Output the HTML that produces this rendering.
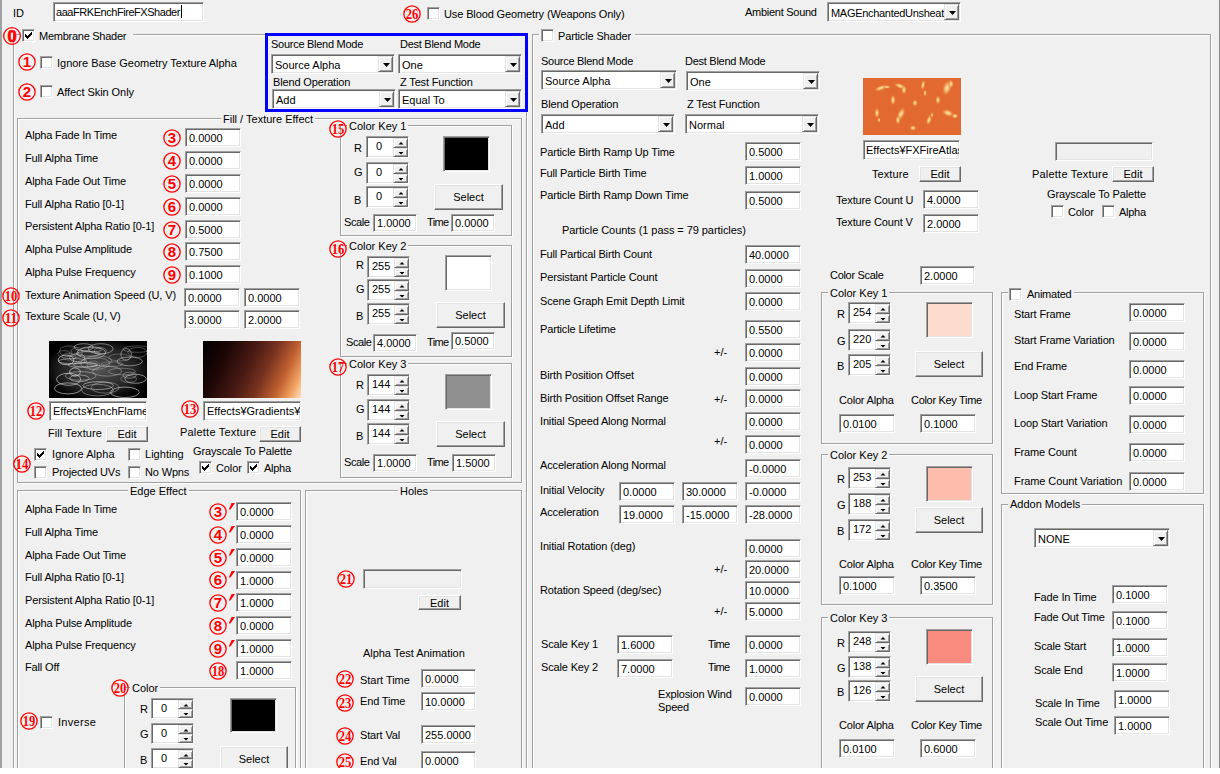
<!DOCTYPE html><html><head><meta charset="utf-8"><style>
*{margin:0;padding:0;box-sizing:border-box}
html,body{width:1220px;height:774px;overflow:hidden;background:#f0f0f0}
body{position:relative;font-family:"Liberation Sans",sans-serif;font-size:11px;color:#000}
.l{position:absolute;white-space:nowrap;line-height:13px}
.gt{background:#f0f0f0;padding:0 2px}
.tb{position:absolute;background:#fff;border:1px solid;border-color:#a0a0a0 #fff #fff #a0a0a0;box-shadow:inset 1px 1px #696969,inset -1px -1px #e3e3e3;overflow:hidden}
.tb>span{position:absolute;white-space:nowrap;line-height:13px}
.cb{position:absolute;width:13px;height:13px;background:#fff;border:1px solid;border-color:#a0a0a0 #fff #fff #a0a0a0;box-shadow:inset 1px 1px #696969,inset -1px -1px #e3e3e3}
.gg{position:absolute;border:1px solid #a0a0a0}
.gw{position:absolute;border:1px solid #fff}
.dd{position:absolute;right:1px;top:1px;background:#f0f0f0;border:1px solid;border-color:#e3e3e3 #696969 #696969 #e3e3e3;box-shadow:inset 1px 1px #fff,inset -1px -1px #a0a0a0}
.sp{position:absolute;width:15px;background:#f0f0f0;border:1px solid;border-color:#e3e3e3 #696969 #696969 #e3e3e3;box-shadow:inset 1px 1px #fff,inset -1px -1px #a0a0a0}
.bt{position:absolute;background:#f0f0f0;border:1px solid;border-color:#fff #696969 #696969 #fff;box-shadow:inset -1px -1px #a0a0a0,inset 1px 1px #e3e3e3;text-align:center}
.bt>span{position:absolute;left:0;right:0;line-height:13px;white-space:nowrap}
.sw{position:absolute;border:1px solid;border-color:#a0a0a0 #fff #fff #a0a0a0;box-shadow:inset 1px 1px #696969,inset -1px -1px #e3e3e3}
.c{position:absolute;overflow:visible}
.bl{position:absolute;border:3px solid #0000ff}
</style></head><body><div style="position:absolute;left:0;top:0;width:2px;height:774px;background:#a0a0a0"></div>
<div style="position:absolute;left:1219px;top:0;width:1px;height:774px;background:#888"></div>
<div class="l" style="left:13px;top:7px;letter-spacing:0px;">ID</div>
<div class="tb" style="left:53px;top:2px;width:151px;height:20px;background:#fff"><span style="left:2px;top:3px;letter-spacing:-0.45px;">aaaFRKEnchFireFXShader</span></div>
<div style="position:absolute;left:181px;top:5px;width:1px;height:13px;background:#000"></div>
<svg class="c" width="24" height="24" style="left:400.00px;top:1.60px"><circle cx="12.0" cy="12.0" r="8.15" fill="none" stroke="#f00" stroke-width="1.3"/><text x="5.7" y="17.3" textLength="12.6" lengthAdjust="spacingAndGlyphs" font-family="Liberation Serif" font-weight="bold" font-size="15.5" fill="#f00">26</text></svg>
<div class="cb" style="left:427px;top:7px"></div>
<div class="l" style="left:444px;top:8px;letter-spacing:-0.12px;">Use Blood Geometry (Weapons Only)</div>
<div class="l" style="left:745px;top:6px;letter-spacing:-0.27px;">Ambient Sound</div>
<div class="tb" style="left:827px;top:2px;width:134px;height:20px"><span style="left:3px;top:4px"><span style="letter-spacing:-0.3px">MAGEnchantedUnsheat</span></span><div class="dd" style="width:15px;height:16px"><svg width="15" height="16" style="position:absolute;left:0;top:0"><path d="M4 6 h7 l-3.5 4z" fill="#000"/></svg></div></div>
<div class="gw" style="left:14px;top:35px;width:514px;height:799px"></div>
<div class="gg" style="left:13px;top:34px;width:514px;height:799px"></div>
<div class="l gt" style="left:21px;top:30px;width:112px;height:13px;padding:0"></div>
<svg class="c" width="24" height="24" style="left:0.00px;top:24.00px"><circle cx="12.0" cy="12.0" r="8.35" fill="none" stroke="#f00" stroke-width="1.3"/><text x="12.0" y="17.8" text-anchor="middle" font-family="Liberation Sans" font-weight="bold" font-size="16.5" fill="#f00" stroke="#f00" stroke-width="0.7">0</text></svg>
<div class="cb" style="left:22px;top:29px"><svg width="7" height="7" style="position:absolute;left:2px;top:2px" shape-rendering="crispEdges" fill="#000"><rect x="6" y="0" width="1" height="1"/><rect x="5" y="1" width="1" height="1"/><rect x="6" y="1" width="1" height="1"/><rect x="0" y="2" width="1" height="1"/><rect x="4" y="2" width="1" height="1"/><rect x="5" y="2" width="1" height="1"/><rect x="6" y="2" width="1" height="1"/><rect x="0" y="3" width="1" height="1"/><rect x="1" y="3" width="1" height="1"/><rect x="3" y="3" width="1" height="1"/><rect x="4" y="3" width="1" height="1"/><rect x="5" y="3" width="1" height="1"/><rect x="0" y="4" width="1" height="1"/><rect x="1" y="4" width="1" height="1"/><rect x="2" y="4" width="1" height="1"/><rect x="3" y="4" width="1" height="1"/><rect x="4" y="4" width="1" height="1"/><rect x="1" y="5" width="1" height="1"/><rect x="2" y="5" width="1" height="1"/><rect x="3" y="5" width="1" height="1"/><rect x="2" y="6" width="1" height="1"/></svg></div>
<div class="l" style="left:39px;top:30px;letter-spacing:-0.26px;">Membrane Shader</div>
<svg class="c" width="24" height="24" style="left:14.70px;top:50.00px"><circle cx="12.0" cy="12.0" r="8.15" fill="none" stroke="#f00" stroke-width="1.3"/><text x="12.0" y="17.3" text-anchor="middle" font-family="Liberation Sans" font-weight="bold" font-size="15" fill="#f00">1</text></svg>
<div class="cb" style="left:40px;top:56px"></div>
<div class="l" style="left:57px;top:57px;letter-spacing:-0.01px;">Ignore Base Geometry Texture Alpha</div>
<svg class="c" width="24" height="24" style="left:14.70px;top:79.50px"><circle cx="12.0" cy="12.0" r="8.15" fill="none" stroke="#f00" stroke-width="1.3"/><text x="12.0" y="17.3" text-anchor="middle" font-family="Liberation Sans" font-weight="bold" font-size="15" fill="#f00">2</text></svg>
<div class="cb" style="left:40px;top:85px"></div>
<div class="l" style="left:57px;top:86px;letter-spacing:-0.07px;">Affect Skin Only</div>
<div class="bl" style="left:265px;top:33px;width:263px;height:79px"></div>
<div class="l" style="left:271px;top:38px;letter-spacing:-0.27px;">Source Blend Mode</div>
<div class="l" style="left:400px;top:38px;letter-spacing:-0.27px;">Dest Blend Mode</div>
<div class="tb" style="left:271px;top:54px;width:124px;height:20px"><span style="left:3px;top:4px">Source Alpha</span><div class="dd" style="width:15px;height:16px"><svg width="15" height="16" style="position:absolute;left:0;top:0"><path d="M4 6 h7 l-3.5 4z" fill="#000"/></svg></div></div>
<div class="tb" style="left:398px;top:54px;width:124px;height:20px"><span style="left:3px;top:4px">One</span><div class="dd" style="width:15px;height:16px"><svg width="15" height="16" style="position:absolute;left:0;top:0"><path d="M4 6 h7 l-3.5 4z" fill="#000"/></svg></div></div>
<div class="l" style="left:273px;top:76px;letter-spacing:-0.15px;">Blend Operation</div>
<div class="l" style="left:400px;top:76px;letter-spacing:-0.15px;">Z Test Function</div>
<div class="tb" style="left:272px;top:89px;width:124px;height:20px"><span style="left:3px;top:4px">Add</span><div class="dd" style="width:15px;height:16px"><svg width="15" height="16" style="position:absolute;left:0;top:0"><path d="M4 6 h7 l-3.5 4z" fill="#000"/></svg></div></div>
<div class="tb" style="left:398px;top:89px;width:124px;height:20px"><span style="left:3px;top:4px">Equal To</span><div class="dd" style="width:15px;height:16px"><svg width="15" height="16" style="position:absolute;left:0;top:0"><path d="M4 6 h7 l-3.5 4z" fill="#000"/></svg></div></div>
<div class="gw" style="left:18px;top:119px;width:505px;height:365px"></div>
<div class="gg" style="left:17px;top:118px;width:505px;height:365px"></div>
<div class="l gt" style="left:221px;top:113px;">Fill / Texture Effect</div>
<div class="l" style="left:25px;top:129px;letter-spacing:-0.19px;">Alpha Fade In Time</div>
<div class="tb" style="left:185px;top:128px;width:56px;height:19px;background:#fff"><span style="left:3px;top:3px;letter-spacing:0px;">0.0000</span></div>
<svg class="c" width="24" height="24" style="left:159.70px;top:126.00px"><circle cx="12.0" cy="12.0" r="8.15" fill="none" stroke="#f00" stroke-width="1.3"/><text x="12.0" y="17.3" text-anchor="middle" font-family="Liberation Sans" font-weight="bold" font-size="15" fill="#f00">3</text></svg>
<div class="l" style="left:25px;top:152px;letter-spacing:-0.15px;">Full Alpha Time</div>
<div class="tb" style="left:185px;top:151px;width:56px;height:19px;background:#fff"><span style="left:3px;top:3px;letter-spacing:0px;">0.0000</span></div>
<svg class="c" width="24" height="24" style="left:159.70px;top:149.00px"><circle cx="12.0" cy="12.0" r="8.15" fill="none" stroke="#f00" stroke-width="1.3"/><text x="12.0" y="17.3" text-anchor="middle" font-family="Liberation Sans" font-weight="bold" font-size="15" fill="#f00">4</text></svg>
<div class="l" style="left:25px;top:175px;letter-spacing:-0.15px;">Alpha Fade Out Time</div>
<div class="tb" style="left:185px;top:174px;width:56px;height:19px;background:#fff"><span style="left:3px;top:3px;letter-spacing:0px;">0.0000</span></div>
<svg class="c" width="24" height="24" style="left:159.70px;top:172.00px"><circle cx="12.0" cy="12.0" r="8.15" fill="none" stroke="#f00" stroke-width="1.3"/><text x="12.0" y="17.3" text-anchor="middle" font-family="Liberation Sans" font-weight="bold" font-size="15" fill="#f00">5</text></svg>
<div class="l" style="left:25px;top:198px;letter-spacing:-0.15px;">Full Alpha Ratio [0-1]</div>
<div class="tb" style="left:185px;top:197px;width:56px;height:19px;background:#fff"><span style="left:3px;top:3px;letter-spacing:0px;">0.0000</span></div>
<svg class="c" width="24" height="24" style="left:159.70px;top:195.00px"><circle cx="12.0" cy="12.0" r="8.15" fill="none" stroke="#f00" stroke-width="1.3"/><text x="12.0" y="17.3" text-anchor="middle" font-family="Liberation Sans" font-weight="bold" font-size="15" fill="#f00">6</text></svg>
<div class="l" style="left:25px;top:220px;letter-spacing:-0.15px;">Persistent Alpha Ratio [0-1]</div>
<div class="tb" style="left:185px;top:220px;width:56px;height:19px;background:#fff"><span style="left:3px;top:3px;letter-spacing:0px;">0.5000</span></div>
<svg class="c" width="24" height="24" style="left:159.70px;top:218.00px"><circle cx="12.0" cy="12.0" r="8.15" fill="none" stroke="#f00" stroke-width="1.3"/><text x="12.0" y="17.3" text-anchor="middle" font-family="Liberation Sans" font-weight="bold" font-size="15" fill="#f00">7</text></svg>
<div class="l" style="left:25px;top:243px;letter-spacing:-0.15px;">Alpha Pulse Amplitude</div>
<div class="tb" style="left:185px;top:242px;width:56px;height:19px;background:#fff"><span style="left:3px;top:3px;letter-spacing:0px;">0.7500</span></div>
<svg class="c" width="24" height="24" style="left:159.70px;top:240.00px"><circle cx="12.0" cy="12.0" r="8.15" fill="none" stroke="#f00" stroke-width="1.3"/><text x="12.0" y="17.3" text-anchor="middle" font-family="Liberation Sans" font-weight="bold" font-size="15" fill="#f00">8</text></svg>
<div class="l" style="left:25px;top:266px;letter-spacing:-0.15px;">Alpha Pulse Frequency</div>
<div class="tb" style="left:185px;top:265px;width:56px;height:19px;background:#fff"><span style="left:3px;top:3px;letter-spacing:0px;">0.1000</span></div>
<svg class="c" width="24" height="24" style="left:159.70px;top:263.00px"><circle cx="12.0" cy="12.0" r="8.15" fill="none" stroke="#f00" stroke-width="1.3"/><text x="12.0" y="17.3" text-anchor="middle" font-family="Liberation Sans" font-weight="bold" font-size="15" fill="#f00">9</text></svg>
<div class="l" style="left:25px;top:289px;letter-spacing:-0.1px;">Texture Animation Speed (U, V)</div>
<svg class="c" width="24" height="24" style="left:-1.20px;top:284.00px"><circle cx="12.0" cy="12.0" r="8.15" fill="none" stroke="#f00" stroke-width="1.3"/><text x="5.7" y="17.3" textLength="12.6" lengthAdjust="spacingAndGlyphs" font-family="Liberation Serif" font-weight="bold" font-size="15.5" fill="#f00">10</text></svg>
<div class="tb" style="left:184px;top:288px;width:56px;height:19px;background:#fff"><span style="left:3px;top:3px;letter-spacing:0px;">0.0000</span></div>
<div class="tb" style="left:244px;top:288px;width:56px;height:19px;background:#fff"><span style="left:3px;top:3px;letter-spacing:0px;">0.0000</span></div>
<div class="l" style="left:25px;top:310px;letter-spacing:-0.15px;">Texture Scale (U, V)</div>
<svg class="c" width="24" height="24" style="left:-1.20px;top:305.50px"><circle cx="12.0" cy="12.0" r="8.15" fill="none" stroke="#f00" stroke-width="1.3"/><text x="5.7" y="17.3" textLength="12.6" lengthAdjust="spacingAndGlyphs" font-family="Liberation Serif" font-weight="bold" font-size="15.5" fill="#f00">11</text></svg>
<div class="tb" style="left:184px;top:310px;width:56px;height:19px;background:#fff"><span style="left:3px;top:3px;letter-spacing:0px;">3.0000</span></div>
<div class="tb" style="left:244px;top:310px;width:56px;height:19px;background:#fff"><span style="left:3px;top:3px;letter-spacing:0px;">2.0000</span></div>
<svg width="98" height="57" style="position:absolute;left:49px;top:341px"><defs><radialGradient id="fg" cx="50%" cy="50%" r="55%"><stop offset="0" stop-color="#555"/><stop offset="0.7" stop-color="#222"/><stop offset="1" stop-color="#000"/></radialGradient></defs><rect width="98" height="57" fill="#000"/><rect width="98" height="57" fill="url(#fg)"/><g fill="none" stroke="#ddd" stroke-width="1"><ellipse cx="39.3" cy="12.9" rx="12.2" ry="2.3" stroke-opacity="0.49"/><ellipse cx="42.4" cy="8.7" rx="10.6" ry="2.1" stroke-opacity="0.45"/><ellipse cx="20.2" cy="10.2" rx="9.7" ry="5.3" stroke-opacity="0.31"/><ellipse cx="31.7" cy="34.9" rx="15.4" ry="4.3" stroke-opacity="0.43"/><ellipse cx="88.2" cy="8.1" rx="14.4" ry="3.2" stroke-opacity="0.31"/><ellipse cx="23.8" cy="20.2" rx="14.0" ry="2.7" stroke-opacity="0.51"/><ellipse cx="62.9" cy="23.1" rx="11.0" ry="2.3" stroke-opacity="0.28"/><ellipse cx="30.4" cy="37.3" rx="9.7" ry="3.3" stroke-opacity="0.51"/><ellipse cx="49.0" cy="19.8" rx="13.7" ry="4.8" stroke-opacity="0.36"/><ellipse cx="58.1" cy="30.2" rx="14.6" ry="4.9" stroke-opacity="0.38"/><ellipse cx="88.5" cy="11.4" rx="9.6" ry="5.0" stroke-opacity="0.32"/><ellipse cx="51.7" cy="7.8" rx="12.4" ry="5.1" stroke-opacity="0.51"/><ellipse cx="80.7" cy="20.4" rx="12.6" ry="4.4" stroke-opacity="0.51"/><ellipse cx="49.2" cy="44.6" rx="15.4" ry="3.9" stroke-opacity="0.55"/><ellipse cx="19.6" cy="38.3" rx="12.1" ry="6.0" stroke-opacity="0.62"/><ellipse cx="36.3" cy="23.7" rx="12.4" ry="2.1" stroke-opacity="0.46"/><ellipse cx="27.6" cy="11.4" rx="5.6" ry="5.1" stroke-opacity="0.31"/><ellipse cx="33.6" cy="24.0" rx="14.6" ry="2.3" stroke-opacity="0.45"/><ellipse cx="56.2" cy="46.6" rx="14.0" ry="5.5" stroke-opacity="0.38"/><ellipse cx="46.1" cy="22.5" rx="14.7" ry="5.8" stroke-opacity="0.32"/><ellipse cx="28.2" cy="16.7" rx="7.6" ry="3.9" stroke-opacity="0.52"/><ellipse cx="34.7" cy="6.2" rx="9.6" ry="3.5" stroke-opacity="0.50"/><ellipse cx="86.5" cy="37.8" rx="10.7" ry="4.5" stroke-opacity="0.55"/><ellipse cx="19.0" cy="47.4" rx="13.6" ry="5.5" stroke-opacity="0.61"/><ellipse cx="44.4" cy="24.4" rx="6.1" ry="4.5" stroke-opacity="0.28"/><ellipse cx="20.1" cy="15.6" rx="6.8" ry="3.4" stroke-opacity="0.27"/><ellipse cx="15.0" cy="13.0" rx="6.1" ry="3.5" stroke-opacity="0.26"/><ellipse cx="80.6" cy="34.2" rx="6.6" ry="3.0" stroke-opacity="0.41"/><ellipse cx="42.3" cy="11.7" rx="14.3" ry="6.0" stroke-opacity="0.46"/><ellipse cx="51.3" cy="10.0" rx="6.1" ry="3.4" stroke-opacity="0.37"/><ellipse cx="77.2" cy="13.4" rx="5.3" ry="5.8" stroke-opacity="0.49"/><ellipse cx="26.0" cy="31.0" rx="5.3" ry="4.1" stroke-opacity="0.69"/><ellipse cx="79.7" cy="38.0" rx="7.9" ry="3.5" stroke-opacity="0.33"/><ellipse cx="72.9" cy="30.5" rx="13.6" ry="3.3" stroke-opacity="0.35"/><ellipse cx="75.9" cy="51.3" rx="14.4" ry="5.2" stroke-opacity="0.62"/><ellipse cx="70.5" cy="16.4" rx="10.7" ry="3.4" stroke-opacity="0.26"/><ellipse cx="17.1" cy="18.9" rx="7.9" ry="4.8" stroke-opacity="0.68"/><ellipse cx="48.5" cy="49.1" rx="15.9" ry="5.8" stroke-opacity="0.41"/></g></svg>
<div style="position:absolute;left:203px;top:341px;width:98px;height:57px;background:linear-gradient(115deg, #000 0%, #1c0606 22%, #4a1a14 45%, #7a3420 62%, #c06030 78%, #f0a060 90%, #ffe0b8 100%)"></div>
<svg class="c" width="24" height="24" style="left:23.60px;top:398.60px"><circle cx="12.0" cy="12.0" r="8.15" fill="none" stroke="#f00" stroke-width="1.3"/><text x="5.7" y="17.3" textLength="12.6" lengthAdjust="spacingAndGlyphs" font-family="Liberation Serif" font-weight="bold" font-size="15.5" fill="#f00">12</text></svg>
<div class="tb" style="left:49px;top:401px;width:98px;height:20px;background:#fff"><span style="left:3px;top:3px;letter-spacing:0px;">Effects¥EnchFlameI</span></div>
<svg class="c" width="24" height="24" style="left:178.00px;top:397.40px"><circle cx="12.0" cy="12.0" r="8.15" fill="none" stroke="#f00" stroke-width="1.3"/><text x="5.7" y="17.3" textLength="12.6" lengthAdjust="spacingAndGlyphs" font-family="Liberation Serif" font-weight="bold" font-size="15.5" fill="#f00">13</text></svg>
<div class="tb" style="left:203px;top:401px;width:98px;height:20px;background:#fff"><span style="left:3px;top:3px;letter-spacing:0px;">Effects¥Gradients¥</span></div>
<div class="l" style="left:48px;top:427px;letter-spacing:0.08px;">Fill Texture</div>
<div class="bt" style="left:106px;top:426px;width:42px;height:16px"><span style="top:1px">Edit</span></div>
<div class="l" style="left:180px;top:426px;letter-spacing:0.21px;">Palette Texture</div>
<div class="bt" style="left:259px;top:426px;width:42px;height:16px"><span style="top:1px">Edit</span></div>
<div class="cb" style="left:34px;top:448px"><svg width="7" height="7" style="position:absolute;left:2px;top:2px" shape-rendering="crispEdges" fill="#000"><rect x="6" y="0" width="1" height="1"/><rect x="5" y="1" width="1" height="1"/><rect x="6" y="1" width="1" height="1"/><rect x="0" y="2" width="1" height="1"/><rect x="4" y="2" width="1" height="1"/><rect x="5" y="2" width="1" height="1"/><rect x="6" y="2" width="1" height="1"/><rect x="0" y="3" width="1" height="1"/><rect x="1" y="3" width="1" height="1"/><rect x="3" y="3" width="1" height="1"/><rect x="4" y="3" width="1" height="1"/><rect x="5" y="3" width="1" height="1"/><rect x="0" y="4" width="1" height="1"/><rect x="1" y="4" width="1" height="1"/><rect x="2" y="4" width="1" height="1"/><rect x="3" y="4" width="1" height="1"/><rect x="4" y="4" width="1" height="1"/><rect x="1" y="5" width="1" height="1"/><rect x="2" y="5" width="1" height="1"/><rect x="3" y="5" width="1" height="1"/><rect x="2" y="6" width="1" height="1"/></svg></div>
<div class="l" style="left:52px;top:448px;letter-spacing:0.07px;">Ignore Alpha</div>
<div class="cb" style="left:128px;top:448px"></div>
<div class="l" style="left:145px;top:448px;letter-spacing:0.03px;">Lighting</div>
<div class="cb" style="left:34px;top:466px"></div>
<div class="l" style="left:52px;top:466px;letter-spacing:-0.15px;">Projected UVs</div>
<div class="cb" style="left:128px;top:466px"></div>
<div class="l" style="left:145px;top:466px;letter-spacing:-0.15px;">No Wpns</div>
<svg class="c" width="24" height="24" style="left:9.80px;top:451.50px"><circle cx="12.0" cy="12.0" r="8.15" fill="none" stroke="#f00" stroke-width="1.3"/><text x="5.7" y="17.3" textLength="12.6" lengthAdjust="spacingAndGlyphs" font-family="Liberation Serif" font-weight="bold" font-size="15.5" fill="#f00">14</text></svg>
<div class="l" style="left:193px;top:445px;letter-spacing:-0.12px;">Grayscale To Palette</div>
<div class="cb" style="left:199px;top:461px"><svg width="7" height="7" style="position:absolute;left:2px;top:2px" shape-rendering="crispEdges" fill="#000"><rect x="6" y="0" width="1" height="1"/><rect x="5" y="1" width="1" height="1"/><rect x="6" y="1" width="1" height="1"/><rect x="0" y="2" width="1" height="1"/><rect x="4" y="2" width="1" height="1"/><rect x="5" y="2" width="1" height="1"/><rect x="6" y="2" width="1" height="1"/><rect x="0" y="3" width="1" height="1"/><rect x="1" y="3" width="1" height="1"/><rect x="3" y="3" width="1" height="1"/><rect x="4" y="3" width="1" height="1"/><rect x="5" y="3" width="1" height="1"/><rect x="0" y="4" width="1" height="1"/><rect x="1" y="4" width="1" height="1"/><rect x="2" y="4" width="1" height="1"/><rect x="3" y="4" width="1" height="1"/><rect x="4" y="4" width="1" height="1"/><rect x="1" y="5" width="1" height="1"/><rect x="2" y="5" width="1" height="1"/><rect x="3" y="5" width="1" height="1"/><rect x="2" y="6" width="1" height="1"/></svg></div>
<div class="l" style="left:216px;top:462px;letter-spacing:-0.12px;">Color</div>
<div class="cb" style="left:247px;top:461px"><svg width="7" height="7" style="position:absolute;left:2px;top:2px" shape-rendering="crispEdges" fill="#000"><rect x="6" y="0" width="1" height="1"/><rect x="5" y="1" width="1" height="1"/><rect x="6" y="1" width="1" height="1"/><rect x="0" y="2" width="1" height="1"/><rect x="4" y="2" width="1" height="1"/><rect x="5" y="2" width="1" height="1"/><rect x="6" y="2" width="1" height="1"/><rect x="0" y="3" width="1" height="1"/><rect x="1" y="3" width="1" height="1"/><rect x="3" y="3" width="1" height="1"/><rect x="4" y="3" width="1" height="1"/><rect x="5" y="3" width="1" height="1"/><rect x="0" y="4" width="1" height="1"/><rect x="1" y="4" width="1" height="1"/><rect x="2" y="4" width="1" height="1"/><rect x="3" y="4" width="1" height="1"/><rect x="4" y="4" width="1" height="1"/><rect x="1" y="5" width="1" height="1"/><rect x="2" y="5" width="1" height="1"/><rect x="3" y="5" width="1" height="1"/><rect x="2" y="6" width="1" height="1"/></svg></div>
<div class="l" style="left:264px;top:462px;letter-spacing:-0.28px;">Alpha</div>
<div class="gw" style="left:341px;top:126px;width:172px;height:111px"></div>
<div class="gg" style="left:340px;top:125px;width:172px;height:111px"></div>
<div class="l gt" style="left:347px;top:120px;">Color Key 1</div>
<svg class="c" width="24" height="24" style="left:325.80px;top:117.00px"><circle cx="12.0" cy="12.0" r="8.15" fill="none" stroke="#f00" stroke-width="1.3"/><text x="5.7" y="17.3" textLength="12.6" lengthAdjust="spacingAndGlyphs" font-family="Liberation Serif" font-weight="bold" font-size="15.5" fill="#f00">15</text></svg>
<div class="l" style="left:354px;top:142px;letter-spacing:0px;">R</div>
<div class="tb" style="left:366px;top:136px;width:43px;height:22px"><span style="left:9px;top:3px">0</span><div class="sp" style="left:26px;top:1px;height:10px"><svg width="14" height="9" style="position:absolute;left:0;top:0"><path d="M4.5 5.5 h5 l-2.5 -2.5z" fill="#000"/></svg></div><div class="sp" style="left:26px;top:11px;height:9px"><svg width="14" height="9" style="position:absolute;left:0;top:0"><path d="M4.5 3 h5 l-2.5 2.5z" fill="#000"/></svg></div></div>
<div class="l" style="left:354px;top:166px;letter-spacing:0px;">G</div>
<div class="tb" style="left:366px;top:162px;width:43px;height:22px"><span style="left:9px;top:3px">0</span><div class="sp" style="left:26px;top:1px;height:10px"><svg width="14" height="9" style="position:absolute;left:0;top:0"><path d="M4.5 5.5 h5 l-2.5 -2.5z" fill="#000"/></svg></div><div class="sp" style="left:26px;top:11px;height:9px"><svg width="14" height="9" style="position:absolute;left:0;top:0"><path d="M4.5 3 h5 l-2.5 2.5z" fill="#000"/></svg></div></div>
<div class="l" style="left:354px;top:194px;letter-spacing:0px;">B</div>
<div class="tb" style="left:366px;top:186px;width:43px;height:22px"><span style="left:9px;top:3px">0</span><div class="sp" style="left:26px;top:1px;height:10px"><svg width="14" height="9" style="position:absolute;left:0;top:0"><path d="M4.5 5.5 h5 l-2.5 -2.5z" fill="#000"/></svg></div><div class="sp" style="left:26px;top:11px;height:9px"><svg width="14" height="9" style="position:absolute;left:0;top:0"><path d="M4.5 3 h5 l-2.5 2.5z" fill="#000"/></svg></div></div>
<div class="sw" style="left:443px;top:136px;width:47px;height:36px;background:#000"></div>
<div class="bt" style="left:434px;top:184px;width:69px;height:26px"><span style="top:6px">Select</span></div>
<div class="l" style="left:344px;top:216px;letter-spacing:-0.42px;">Scale</div>
<div class="tb" style="left:373px;top:214px;width:44px;height:18px;background:#fff"><span style="left:3px;top:2px;letter-spacing:0px;">1.0000</span></div>
<div class="l" style="left:427px;top:216px;letter-spacing:-0.6px;">Time</div>
<div class="tb" style="left:451px;top:214px;width:44px;height:18px;background:#fff"><span style="left:3px;top:2px;letter-spacing:0px;">0.0000</span></div>
<div class="gw" style="left:341px;top:246px;width:172px;height:112px"></div>
<div class="gg" style="left:340px;top:245px;width:172px;height:112px"></div>
<div class="l gt" style="left:347px;top:240px;">Color Key 2</div>
<svg class="c" width="24" height="24" style="left:325.80px;top:237.00px"><circle cx="12.0" cy="12.0" r="8.15" fill="none" stroke="#f00" stroke-width="1.3"/><text x="5.7" y="17.3" textLength="12.6" lengthAdjust="spacingAndGlyphs" font-family="Liberation Serif" font-weight="bold" font-size="15.5" fill="#f00">16</text></svg>
<div class="l" style="left:356px;top:259px;letter-spacing:0px;">R</div>
<div class="tb" style="left:367px;top:256px;width:43px;height:22px"><span style="left:4px;top:3px">255</span><div class="sp" style="left:26px;top:1px;height:10px"><svg width="14" height="9" style="position:absolute;left:0;top:0"><path d="M4.5 5.5 h5 l-2.5 -2.5z" fill="#000"/></svg></div><div class="sp" style="left:26px;top:11px;height:9px"><svg width="14" height="9" style="position:absolute;left:0;top:0"><path d="M4.5 3 h5 l-2.5 2.5z" fill="#000"/></svg></div></div>
<div class="l" style="left:356px;top:283px;letter-spacing:0px;">G</div>
<div class="tb" style="left:367px;top:279px;width:43px;height:22px"><span style="left:4px;top:3px">255</span><div class="sp" style="left:26px;top:1px;height:10px"><svg width="14" height="9" style="position:absolute;left:0;top:0"><path d="M4.5 5.5 h5 l-2.5 -2.5z" fill="#000"/></svg></div><div class="sp" style="left:26px;top:11px;height:9px"><svg width="14" height="9" style="position:absolute;left:0;top:0"><path d="M4.5 3 h5 l-2.5 2.5z" fill="#000"/></svg></div></div>
<div class="l" style="left:356px;top:310px;letter-spacing:0px;">B</div>
<div class="tb" style="left:367px;top:303px;width:43px;height:22px"><span style="left:4px;top:3px">255</span><div class="sp" style="left:26px;top:1px;height:10px"><svg width="14" height="9" style="position:absolute;left:0;top:0"><path d="M4.5 5.5 h5 l-2.5 -2.5z" fill="#000"/></svg></div><div class="sp" style="left:26px;top:11px;height:9px"><svg width="14" height="9" style="position:absolute;left:0;top:0"><path d="M4.5 3 h5 l-2.5 2.5z" fill="#000"/></svg></div></div>
<div class="sw" style="left:445px;top:255px;width:47px;height:36px;background:#fff"></div>
<div class="bt" style="left:436px;top:302px;width:69px;height:26px"><span style="top:6px">Select</span></div>
<div class="l" style="left:346px;top:336px;letter-spacing:-0.42px;">Scale</div>
<div class="tb" style="left:373px;top:334px;width:44px;height:18px;background:#fff"><span style="left:3px;top:2px;letter-spacing:0px;">4.0000</span></div>
<div class="l" style="left:427px;top:336px;letter-spacing:-0.6px;">Time</div>
<div class="tb" style="left:451px;top:332px;width:44px;height:18px;background:#fff"><span style="left:3px;top:2px;letter-spacing:0px;">0.5000</span></div>
<div class="gw" style="left:341px;top:364px;width:172px;height:115px"></div>
<div class="gg" style="left:340px;top:363px;width:172px;height:115px"></div>
<div class="l gt" style="left:347px;top:358px;">Color Key 3</div>
<svg class="c" width="24" height="24" style="left:325.80px;top:355.00px"><circle cx="12.0" cy="12.0" r="8.15" fill="none" stroke="#f00" stroke-width="1.3"/><text x="5.7" y="17.3" textLength="12.6" lengthAdjust="spacingAndGlyphs" font-family="Liberation Serif" font-weight="bold" font-size="15.5" fill="#f00">17</text></svg>
<div class="l" style="left:356px;top:379px;letter-spacing:0px;">R</div>
<div class="tb" style="left:367px;top:374px;width:43px;height:22px"><span style="left:4px;top:3px">144</span><div class="sp" style="left:26px;top:1px;height:10px"><svg width="14" height="9" style="position:absolute;left:0;top:0"><path d="M4.5 5.5 h5 l-2.5 -2.5z" fill="#000"/></svg></div><div class="sp" style="left:26px;top:11px;height:9px"><svg width="14" height="9" style="position:absolute;left:0;top:0"><path d="M4.5 3 h5 l-2.5 2.5z" fill="#000"/></svg></div></div>
<div class="l" style="left:356px;top:403px;letter-spacing:0px;">G</div>
<div class="tb" style="left:367px;top:399px;width:43px;height:22px"><span style="left:4px;top:3px">144</span><div class="sp" style="left:26px;top:1px;height:10px"><svg width="14" height="9" style="position:absolute;left:0;top:0"><path d="M4.5 5.5 h5 l-2.5 -2.5z" fill="#000"/></svg></div><div class="sp" style="left:26px;top:11px;height:9px"><svg width="14" height="9" style="position:absolute;left:0;top:0"><path d="M4.5 3 h5 l-2.5 2.5z" fill="#000"/></svg></div></div>
<div class="l" style="left:356px;top:430px;letter-spacing:0px;">B</div>
<div class="tb" style="left:367px;top:423px;width:43px;height:22px"><span style="left:4px;top:3px">144</span><div class="sp" style="left:26px;top:1px;height:10px"><svg width="14" height="9" style="position:absolute;left:0;top:0"><path d="M4.5 5.5 h5 l-2.5 -2.5z" fill="#000"/></svg></div><div class="sp" style="left:26px;top:11px;height:9px"><svg width="14" height="9" style="position:absolute;left:0;top:0"><path d="M4.5 3 h5 l-2.5 2.5z" fill="#000"/></svg></div></div>
<div class="sw" style="left:445px;top:374px;width:47px;height:36px;background:#909090"></div>
<div class="bt" style="left:436px;top:421px;width:69px;height:26px"><span style="top:6px">Select</span></div>
<div class="l" style="left:344px;top:456px;letter-spacing:-0.42px;">Scale</div>
<div class="tb" style="left:373px;top:454px;width:44px;height:18px;background:#fff"><span style="left:3px;top:2px;letter-spacing:0px;">1.0000</span></div>
<div class="l" style="left:427px;top:456px;letter-spacing:-0.6px;">Time</div>
<div class="tb" style="left:452px;top:454px;width:44px;height:18px;background:#fff"><span style="left:3px;top:2px;letter-spacing:0px;">1.5000</span></div>
<div class="gw" style="left:18px;top:491px;width:284px;height:399px"></div>
<div class="gg" style="left:17px;top:490px;width:284px;height:399px"></div>
<div class="l gt" style="left:128px;top:485px;">Edge Effect</div>
<div class="l" style="left:25px;top:503px;letter-spacing:-0.19px;">Alpha Fade In Time</div>
<div class="tb" style="left:236px;top:502px;width:56px;height:19px;background:#fff"><span style="left:3px;top:3px;letter-spacing:0px;">0.0000</span></div>
<svg class="c" width="24" height="24" style="left:205.90px;top:500.00px"><circle cx="12.0" cy="12.0" r="8.15" fill="none" stroke="#f00" stroke-width="1.3"/><text x="12.0" y="17.3" text-anchor="middle" font-family="Liberation Sans" font-weight="bold" font-size="15" fill="#f00">3</text></svg>
<svg class="c" width="8" height="10" style="left:227.90px;top:503.20px"><path d="M3.6 0 L7 0 L2.4 6.5 L0.8 6.5z" fill="#f00"/></svg>
<div class="l" style="left:25px;top:526px;letter-spacing:-0.15px;">Full Alpha Time</div>
<div class="tb" style="left:236px;top:525px;width:56px;height:19px;background:#fff"><span style="left:3px;top:3px;letter-spacing:0px;">0.0000</span></div>
<svg class="c" width="24" height="24" style="left:205.90px;top:522.80px"><circle cx="12.0" cy="12.0" r="8.15" fill="none" stroke="#f00" stroke-width="1.3"/><text x="12.0" y="17.3" text-anchor="middle" font-family="Liberation Sans" font-weight="bold" font-size="15" fill="#f00">4</text></svg>
<svg class="c" width="8" height="10" style="left:227.90px;top:526.00px"><path d="M3.6 0 L7 0 L2.4 6.5 L0.8 6.5z" fill="#f00"/></svg>
<div class="l" style="left:25px;top:549px;letter-spacing:-0.15px;">Alpha Fade Out Time</div>
<div class="tb" style="left:236px;top:548px;width:56px;height:19px;background:#fff"><span style="left:3px;top:3px;letter-spacing:0px;">0.0000</span></div>
<svg class="c" width="24" height="24" style="left:205.90px;top:546.00px"><circle cx="12.0" cy="12.0" r="8.15" fill="none" stroke="#f00" stroke-width="1.3"/><text x="12.0" y="17.3" text-anchor="middle" font-family="Liberation Sans" font-weight="bold" font-size="15" fill="#f00">5</text></svg>
<svg class="c" width="8" height="10" style="left:227.90px;top:549.20px"><path d="M3.6 0 L7 0 L2.4 6.5 L0.8 6.5z" fill="#f00"/></svg>
<div class="l" style="left:25px;top:571px;letter-spacing:-0.15px;">Full Alpha Ratio [0-1]</div>
<div class="tb" style="left:236px;top:571px;width:56px;height:19px;background:#fff"><span style="left:3px;top:3px;letter-spacing:0px;">1.0000</span></div>
<svg class="c" width="24" height="24" style="left:205.90px;top:568.20px"><circle cx="12.0" cy="12.0" r="8.15" fill="none" stroke="#f00" stroke-width="1.3"/><text x="12.0" y="17.3" text-anchor="middle" font-family="Liberation Sans" font-weight="bold" font-size="15" fill="#f00">6</text></svg>
<svg class="c" width="8" height="10" style="left:227.90px;top:571.40px"><path d="M3.6 0 L7 0 L2.4 6.5 L0.8 6.5z" fill="#f00"/></svg>
<div class="l" style="left:25px;top:594px;letter-spacing:-0.15px;">Persistent Alpha Ratio [0-1]</div>
<div class="tb" style="left:236px;top:593px;width:56px;height:19px;background:#fff"><span style="left:3px;top:3px;letter-spacing:0px;">1.0000</span></div>
<svg class="c" width="24" height="24" style="left:205.90px;top:590.90px"><circle cx="12.0" cy="12.0" r="8.15" fill="none" stroke="#f00" stroke-width="1.3"/><text x="12.0" y="17.3" text-anchor="middle" font-family="Liberation Sans" font-weight="bold" font-size="15" fill="#f00">7</text></svg>
<svg class="c" width="8" height="10" style="left:227.90px;top:594.10px"><path d="M3.6 0 L7 0 L2.4 6.5 L0.8 6.5z" fill="#f00"/></svg>
<div class="l" style="left:25px;top:617px;letter-spacing:-0.15px;">Alpha Pulse Amplitude</div>
<div class="tb" style="left:236px;top:616px;width:56px;height:19px;background:#fff"><span style="left:3px;top:3px;letter-spacing:0px;">0.0000</span></div>
<svg class="c" width="24" height="24" style="left:205.90px;top:613.50px"><circle cx="12.0" cy="12.0" r="8.15" fill="none" stroke="#f00" stroke-width="1.3"/><text x="12.0" y="17.3" text-anchor="middle" font-family="Liberation Sans" font-weight="bold" font-size="15" fill="#f00">8</text></svg>
<svg class="c" width="8" height="10" style="left:227.90px;top:616.70px"><path d="M3.6 0 L7 0 L2.4 6.5 L0.8 6.5z" fill="#f00"/></svg>
<div class="l" style="left:25px;top:639px;letter-spacing:-0.15px;">Alpha Pulse Frequency</div>
<div class="tb" style="left:236px;top:639px;width:56px;height:19px;background:#fff"><span style="left:3px;top:3px;letter-spacing:0px;">1.0000</span></div>
<svg class="c" width="24" height="24" style="left:205.90px;top:636.50px"><circle cx="12.0" cy="12.0" r="8.15" fill="none" stroke="#f00" stroke-width="1.3"/><text x="12.0" y="17.3" text-anchor="middle" font-family="Liberation Sans" font-weight="bold" font-size="15" fill="#f00">9</text></svg>
<svg class="c" width="8" height="10" style="left:227.90px;top:639.70px"><path d="M3.6 0 L7 0 L2.4 6.5 L0.8 6.5z" fill="#f00"/></svg>
<div class="l" style="left:25px;top:661px;letter-spacing:-0.15px;">Fall Off</div>
<div class="tb" style="left:236px;top:661px;width:56px;height:19px;background:#fff"><span style="left:3px;top:3px;letter-spacing:0px;">1.0000</span></div>
<svg class="c" width="24" height="24" style="left:205.90px;top:658.50px"><circle cx="12.0" cy="12.0" r="8.15" fill="none" stroke="#f00" stroke-width="1.3"/><text x="5.7" y="17.3" textLength="12.6" lengthAdjust="spacingAndGlyphs" font-family="Liberation Serif" font-weight="bold" font-size="15.5" fill="#f00">18</text></svg>
<div class="gw" style="left:125px;top:688px;width:172px;height:199px"></div>
<div class="gg" style="left:124px;top:687px;width:172px;height:199px"></div>
<div class="l gt" style="left:130px;top:682px;">Color</div>
<svg class="c" width="24" height="24" style="left:108.00px;top:675.50px"><circle cx="12.0" cy="12.0" r="8.15" fill="none" stroke="#f00" stroke-width="1.3"/><text x="5.7" y="17.3" textLength="12.6" lengthAdjust="spacingAndGlyphs" font-family="Liberation Serif" font-weight="bold" font-size="15.5" fill="#f00">20</text></svg>
<div class="l" style="left:140px;top:703px;letter-spacing:0px;">R</div>
<div class="tb" style="left:151px;top:698px;width:43px;height:21px"><span style="left:9px;top:3px">0</span><div class="sp" style="left:26px;top:1px;height:9px"><svg width="14" height="9" style="position:absolute;left:0;top:0"><path d="M4.5 5.5 h5 l-2.5 -2.5z" fill="#000"/></svg></div><div class="sp" style="left:26px;top:10px;height:9px"><svg width="14" height="9" style="position:absolute;left:0;top:0"><path d="M4.5 3 h5 l-2.5 2.5z" fill="#000"/></svg></div></div>
<div class="l" style="left:140px;top:728px;letter-spacing:0px;">G</div>
<div class="tb" style="left:151px;top:723px;width:43px;height:21px"><span style="left:9px;top:3px">0</span><div class="sp" style="left:26px;top:1px;height:9px"><svg width="14" height="9" style="position:absolute;left:0;top:0"><path d="M4.5 5.5 h5 l-2.5 -2.5z" fill="#000"/></svg></div><div class="sp" style="left:26px;top:10px;height:9px"><svg width="14" height="9" style="position:absolute;left:0;top:0"><path d="M4.5 3 h5 l-2.5 2.5z" fill="#000"/></svg></div></div>
<div class="l" style="left:140px;top:754px;letter-spacing:0px;">B</div>
<div class="tb" style="left:151px;top:748px;width:43px;height:21px"><span style="left:9px;top:3px">0</span><div class="sp" style="left:26px;top:1px;height:9px"><svg width="14" height="9" style="position:absolute;left:0;top:0"><path d="M4.5 5.5 h5 l-2.5 -2.5z" fill="#000"/></svg></div><div class="sp" style="left:26px;top:10px;height:9px"><svg width="14" height="9" style="position:absolute;left:0;top:0"><path d="M4.5 3 h5 l-2.5 2.5z" fill="#000"/></svg></div></div>
<div class="sw" style="left:230px;top:698px;width:47px;height:35px;background:#000"></div>
<div class="bt" style="left:220px;top:746px;width:68px;height:25px"><span style="top:6px">Select</span></div>
<svg class="c" width="24" height="24" style="left:17.00px;top:708.80px"><circle cx="12.0" cy="12.0" r="8.15" fill="none" stroke="#f00" stroke-width="1.3"/><text x="5.7" y="17.3" textLength="12.6" lengthAdjust="spacingAndGlyphs" font-family="Liberation Serif" font-weight="bold" font-size="15.5" fill="#f00">19</text></svg>
<div class="cb" style="left:40px;top:716px"></div>
<div class="l" style="left:58px;top:716px;letter-spacing:0.29px;">Inverse</div>
<div class="gw" style="left:306px;top:491px;width:217px;height:399px"></div>
<div class="gg" style="left:305px;top:490px;width:217px;height:399px"></div>
<div class="l gt" style="left:398px;top:485px;">Holes</div>
<svg class="c" width="24" height="24" style="left:334.00px;top:566.80px"><circle cx="12.0" cy="12.0" r="8.15" fill="none" stroke="#f00" stroke-width="1.3"/><text x="5.7" y="17.3" textLength="12.6" lengthAdjust="spacingAndGlyphs" font-family="Liberation Serif" font-weight="bold" font-size="15.5" fill="#f00">21</text></svg>
<div class="tb" style="left:363px;top:569px;width:99px;height:20px;background:#f0f0f0"><span style="left:3px;top:3px;letter-spacing:0px;"></span></div>
<div class="bt" style="left:418px;top:595px;width:43px;height:15px"><span style="top:1px">Edit</span></div>
<div class="l" style="left:363px;top:647px;letter-spacing:-0.04px;">Alpha Test Animation</div>
<svg class="c" width="24" height="24" style="left:332.70px;top:666.80px"><circle cx="12.0" cy="12.0" r="8.15" fill="none" stroke="#f00" stroke-width="1.3"/><text x="5.7" y="17.3" textLength="12.6" lengthAdjust="spacingAndGlyphs" font-family="Liberation Serif" font-weight="bold" font-size="15.5" fill="#f00">22</text></svg>
<div class="l" style="left:360px;top:674px;letter-spacing:-0.03px;">Start Time</div>
<div class="tb" style="left:421px;top:669px;width:55px;height:19px;background:#fff"><span style="left:3px;top:3px;letter-spacing:0px;">0.0000</span></div>
<svg class="c" width="24" height="24" style="left:332.70px;top:690.50px"><circle cx="12.0" cy="12.0" r="8.15" fill="none" stroke="#f00" stroke-width="1.3"/><text x="5.7" y="17.3" textLength="12.6" lengthAdjust="spacingAndGlyphs" font-family="Liberation Serif" font-weight="bold" font-size="15.5" fill="#f00">23</text></svg>
<div class="l" style="left:360px;top:695px;letter-spacing:-0.15px;">End Time</div>
<div class="tb" style="left:421px;top:692px;width:55px;height:19px;background:#fff"><span style="left:3px;top:3px;letter-spacing:0px;">10.0000</span></div>
<svg class="c" width="24" height="24" style="left:332.70px;top:723.50px"><circle cx="12.0" cy="12.0" r="8.15" fill="none" stroke="#f00" stroke-width="1.3"/><text x="5.7" y="17.3" textLength="12.6" lengthAdjust="spacingAndGlyphs" font-family="Liberation Serif" font-weight="bold" font-size="15.5" fill="#f00">24</text></svg>
<div class="l" style="left:360px;top:729px;letter-spacing:-0.15px;">Start Val</div>
<div class="tb" style="left:421px;top:725px;width:55px;height:19px;background:#fff"><span style="left:3px;top:3px;letter-spacing:0px;">255.0000</span></div>
<svg class="c" width="24" height="24" style="left:332.70px;top:749.50px"><circle cx="12.0" cy="12.0" r="8.15" fill="none" stroke="#f00" stroke-width="1.3"/><text x="5.7" y="17.3" textLength="12.6" lengthAdjust="spacingAndGlyphs" font-family="Liberation Serif" font-weight="bold" font-size="15.5" fill="#f00">25</text></svg>
<div class="l" style="left:360px;top:755px;letter-spacing:-0.15px;">End Val</div>
<div class="tb" style="left:421px;top:751px;width:55px;height:19px;background:#fff"><span style="left:3px;top:3px;letter-spacing:0px;">0.0000</span></div>
<div class="gw" style="left:533px;top:35px;width:679px;height:799px"></div>
<div class="gg" style="left:532px;top:34px;width:679px;height:799px"></div>
<div class="l gt" style="left:539px;top:30px;width:96px;height:13px;padding:0"></div>
<div class="cb" style="left:541px;top:29px"></div>
<div class="l" style="left:558px;top:30px;letter-spacing:-0.15px;">Particle Shader</div>
<div class="l" style="left:541px;top:55px;letter-spacing:-0.27px;">Source Blend Mode</div>
<div class="l" style="left:685px;top:55px;letter-spacing:-0.27px;">Dest Blend Mode</div>
<div class="tb" style="left:541px;top:70px;width:136px;height:20px"><span style="left:3px;top:4px">Source Alpha</span><div class="dd" style="width:15px;height:16px"><svg width="15" height="16" style="position:absolute;left:0;top:0"><path d="M4 6 h7 l-3.5 4z" fill="#000"/></svg></div></div>
<div class="tb" style="left:686px;top:71px;width:134px;height:20px"><span style="left:3px;top:4px">One</span><div class="dd" style="width:15px;height:16px"><svg width="15" height="16" style="position:absolute;left:0;top:0"><path d="M4 6 h7 l-3.5 4z" fill="#000"/></svg></div></div>
<div class="l" style="left:541px;top:98px;letter-spacing:-0.15px;">Blend Operation</div>
<div class="l" style="left:687px;top:98px;letter-spacing:-0.15px;">Z Test Function</div>
<div class="tb" style="left:541px;top:114px;width:134px;height:20px"><span style="left:3px;top:4px">Add</span><div class="dd" style="width:15px;height:16px"><svg width="15" height="16" style="position:absolute;left:0;top:0"><path d="M4 6 h7 l-3.5 4z" fill="#000"/></svg></div></div>
<div class="tb" style="left:685px;top:114px;width:134px;height:20px"><span style="left:3px;top:4px">Normal</span><div class="dd" style="width:15px;height:16px"><svg width="15" height="16" style="position:absolute;left:0;top:0"><path d="M4 6 h7 l-3.5 4z" fill="#000"/></svg></div></div>
<div class="l" style="left:540px;top:146px;letter-spacing:-0.15px;">Particle Birth Ramp Up Time</div>
<div class="tb" style="left:745px;top:142px;width:56px;height:19px;background:#fff"><span style="left:3px;top:3px;letter-spacing:0px;">0.5000</span></div>
<div class="l" style="left:540px;top:167px;letter-spacing:-0.15px;">Full Particle Birth Time</div>
<div class="tb" style="left:745px;top:166px;width:56px;height:19px;background:#fff"><span style="left:3px;top:3px;letter-spacing:0px;">1.0000</span></div>
<div class="l" style="left:540px;top:189px;letter-spacing:-0.15px;">Particle Birth Ramp Down Time</div>
<div class="tb" style="left:745px;top:191px;width:56px;height:19px;background:#fff"><span style="left:3px;top:3px;letter-spacing:0px;">0.5000</span></div>
<div class="l" style="left:540px;top:248px;letter-spacing:-0.15px;">Full Partical Birth Count</div>
<div class="tb" style="left:745px;top:245px;width:56px;height:19px;background:#fff"><span style="left:3px;top:3px;letter-spacing:0px;">40.0000</span></div>
<div class="l" style="left:540px;top:271px;letter-spacing:-0.15px;">Persistant Particle Count</div>
<div class="tb" style="left:745px;top:269px;width:56px;height:19px;background:#fff"><span style="left:3px;top:3px;letter-spacing:0px;">0.0000</span></div>
<div class="l" style="left:540px;top:295px;letter-spacing:-0.15px;">Scene Graph Emit Depth Limit</div>
<div class="tb" style="left:745px;top:292px;width:56px;height:19px;background:#fff"><span style="left:3px;top:3px;letter-spacing:0px;">0.0000</span></div>
<div class="l" style="left:540px;top:323px;letter-spacing:-0.15px;">Particle Lifetime</div>
<div class="tb" style="left:745px;top:320px;width:56px;height:19px;background:#fff"><span style="left:3px;top:3px;letter-spacing:0px;">0.5500</span></div>
<div class="tb" style="left:745px;top:343px;width:56px;height:19px;background:#fff"><span style="left:3px;top:3px;letter-spacing:0px;">0.0000</span></div>
<div class="l" style="left:540px;top:369px;letter-spacing:-0.15px;">Birth Position Offset</div>
<div class="tb" style="left:745px;top:367px;width:56px;height:19px;background:#fff"><span style="left:3px;top:3px;letter-spacing:0px;">0.0000</span></div>
<div class="l" style="left:540px;top:392px;letter-spacing:-0.15px;">Birth Position Offset Range</div>
<div class="tb" style="left:745px;top:389px;width:56px;height:19px;background:#fff"><span style="left:3px;top:3px;letter-spacing:0px;">0.0000</span></div>
<div class="l" style="left:540px;top:415px;letter-spacing:-0.15px;">Initial Speed Along Normal</div>
<div class="tb" style="left:745px;top:412px;width:56px;height:19px;background:#fff"><span style="left:3px;top:3px;letter-spacing:0px;">0.0000</span></div>
<div class="tb" style="left:745px;top:435px;width:56px;height:19px;background:#fff"><span style="left:3px;top:3px;letter-spacing:0px;">0.0000</span></div>
<div class="l" style="left:540px;top:459px;letter-spacing:-0.15px;">Acceleration Along Normal</div>
<div class="tb" style="left:745px;top:459px;width:56px;height:19px;background:#fff"><span style="left:3px;top:3px;letter-spacing:0px;">-0.0000</span></div>
<div class="l" style="left:540px;top:540px;letter-spacing:-0.15px;">Initial Rotation (deg)</div>
<div class="tb" style="left:745px;top:539px;width:56px;height:19px;background:#fff"><span style="left:3px;top:3px;letter-spacing:0px;">0.0000</span></div>
<div class="tb" style="left:745px;top:560px;width:56px;height:19px;background:#fff"><span style="left:3px;top:3px;letter-spacing:0px;">20.0000</span></div>
<div class="l" style="left:540px;top:584px;letter-spacing:-0.15px;">Rotation Speed (deg/sec)</div>
<div class="tb" style="left:745px;top:581px;width:56px;height:19px;background:#fff"><span style="left:3px;top:3px;letter-spacing:0px;">10.0000</span></div>
<div class="tb" style="left:745px;top:602px;width:56px;height:19px;background:#fff"><span style="left:3px;top:3px;letter-spacing:0px;">5.0000</span></div>
<div class="l" style="left:714px;top:346px;letter-spacing:0px;">+/-</div>
<div class="l" style="left:714px;top:393px;letter-spacing:0px;">+/-</div>
<div class="l" style="left:714px;top:435px;letter-spacing:0px;">+/-</div>
<div class="l" style="left:714px;top:563px;letter-spacing:0px;">+/-</div>
<div class="l" style="left:714px;top:605px;letter-spacing:0px;">+/-</div>
<div class="l" style="left:562px;top:224px;letter-spacing:-0.06px;">Particle Counts (1 pass = 79 particles)</div>
<div class="l" style="left:540px;top:484px;letter-spacing:-0.15px;">Initial Velocity</div>
<div class="tb" style="left:619px;top:482px;width:56px;height:19px;background:#fff"><span style="left:3px;top:3px;letter-spacing:0px;">0.0000</span></div>
<div class="tb" style="left:682px;top:482px;width:56px;height:19px;background:#fff"><span style="left:3px;top:3px;letter-spacing:0px;">30.0000</span></div>
<div class="tb" style="left:745px;top:482px;width:56px;height:19px;background:#fff"><span style="left:3px;top:3px;letter-spacing:0px;">-0.0000</span></div>
<div class="l" style="left:540px;top:506px;letter-spacing:-0.15px;">Acceleration</div>
<div class="tb" style="left:619px;top:505px;width:56px;height:19px;background:#fff"><span style="left:3px;top:3px;letter-spacing:0px;">19.0000</span></div>
<div class="tb" style="left:682px;top:505px;width:56px;height:19px;background:#fff"><span style="left:3px;top:3px;letter-spacing:0px;">-15.0000</span></div>
<div class="tb" style="left:745px;top:505px;width:56px;height:19px;background:#fff"><span style="left:3px;top:3px;letter-spacing:0px;">-28.0000</span></div>
<div class="l" style="left:541px;top:638px;letter-spacing:-0.15px;">Scale Key 1</div>
<div class="tb" style="left:617px;top:635px;width:56px;height:19px;background:#fff"><span style="left:3px;top:3px;letter-spacing:0px;">1.6000</span></div>
<div class="l" style="left:708px;top:638px;letter-spacing:-0.6px;">Time</div>
<div class="tb" style="left:745px;top:635px;width:56px;height:19px;background:#fff"><span style="left:3px;top:3px;letter-spacing:0px;">0.0000</span></div>
<div class="l" style="left:541px;top:661px;letter-spacing:-0.15px;">Scale Key 2</div>
<div class="tb" style="left:617px;top:659px;width:56px;height:19px;background:#fff"><span style="left:3px;top:3px;letter-spacing:0px;">7.0000</span></div>
<div class="l" style="left:708px;top:661px;letter-spacing:-0.6px;">Time</div>
<div class="tb" style="left:745px;top:659px;width:56px;height:19px;background:#fff"><span style="left:3px;top:3px;letter-spacing:0px;">1.0000</span></div>
<div class="l" style="left:658px;top:688px;letter-spacing:-0.15px;">Explosion Wind</div>
<div class="l" style="left:658px;top:701px;letter-spacing:-0.15px;">Speed</div>
<div class="tb" style="left:745px;top:687px;width:56px;height:19px;background:#fff"><span style="left:3px;top:3px;letter-spacing:0px;">0.0000</span></div>
<svg width="98" height="57" style="position:absolute;left:863px;top:78px"><defs><radialGradient id="fb"><stop offset="0" stop-color="#fff0c0"/><stop offset="0.45" stop-color="#f8b868" stop-opacity="0.85"/><stop offset="1" stop-color="#e2692f" stop-opacity="0"/></radialGradient></defs><rect width="98" height="57" fill="#e2692f"/><ellipse cx="18" cy="10" rx="8" ry="3" transform="rotate(-20 18 10)" fill="url(#fb)"/><ellipse cx="24" cy="9" rx="4" ry="2" transform="rotate(0 24 9)" fill="url(#fb)"/><ellipse cx="37" cy="8" rx="7" ry="3" transform="rotate(20 37 8)" fill="url(#fb)"/><ellipse cx="41" cy="12" rx="3" ry="5" transform="rotate(0 41 12)" fill="url(#fb)"/><ellipse cx="60" cy="7" rx="2.5" ry="6" transform="rotate(10 60 7)" fill="url(#fb)"/><ellipse cx="62" cy="15" rx="2" ry="4" transform="rotate(0 62 15)" fill="url(#fb)"/><ellipse cx="84" cy="10" rx="5" ry="9" transform="rotate(15 84 10)" fill="url(#fb)"/><ellipse cx="88" cy="6" rx="3" ry="5" transform="rotate(0 88 6)" fill="url(#fb)"/><ellipse cx="14" cy="35" rx="3" ry="6" transform="rotate(0 14 35)" fill="url(#fb)"/><ellipse cx="16" cy="42" rx="2" ry="3" transform="rotate(0 16 42)" fill="url(#fb)"/><ellipse cx="38" cy="36" rx="4" ry="8" transform="rotate(25 38 36)" fill="url(#fb)"/><ellipse cx="35" cy="42" rx="3" ry="5" transform="rotate(0 35 42)" fill="url(#fb)"/><ellipse cx="66" cy="42" rx="3" ry="6" transform="rotate(15 66 42)" fill="url(#fb)"/><ellipse cx="69" cy="37" rx="2" ry="3" transform="rotate(0 69 37)" fill="url(#fb)"/><ellipse cx="85" cy="35" rx="7" ry="4" transform="rotate(20 85 35)" fill="url(#fb)"/><ellipse cx="92" cy="38" rx="4" ry="3" transform="rotate(0 92 38)" fill="url(#fb)"/><ellipse cx="30" cy="22" rx="3" ry="6" transform="rotate(0 30 22)" fill="url(#fb)"/><ellipse cx="52" cy="25" rx="3" ry="4" transform="rotate(0 52 25)" fill="url(#fb)"/><ellipse cx="75" cy="22" rx="3" ry="5" transform="rotate(0 75 22)" fill="url(#fb)"/><ellipse cx="50" cy="50" rx="4" ry="3" transform="rotate(0 50 50)" fill="url(#fb)"/></svg>
<div class="tb" style="left:863px;top:140px;width:97px;height:20px;background:#fff"><span style="left:2px;top:3px;letter-spacing:0px;">Effects¥FXFireAtlas</span></div>
<div class="l" style="left:872px;top:168px;letter-spacing:0.08px;">Texture</div>
<div class="bt" style="left:919px;top:166px;width:42px;height:16px"><span style="top:1px">Edit</span></div>
<div class="tb" style="left:1055px;top:142px;width:98px;height:19px;background:#f0f0f0"><span style="left:3px;top:3px;letter-spacing:0px;"></span></div>
<div class="l" style="left:1032px;top:168px;letter-spacing:0.21px;">Palette Texture</div>
<div class="bt" style="left:1112px;top:166px;width:42px;height:16px"><span style="top:1px">Edit</span></div>
<div class="l" style="left:1047px;top:188px;letter-spacing:-0.12px;">Grayscale To Palette</div>
<div class="cb" style="left:1051px;top:205px"></div>
<div class="l" style="left:1068px;top:206px;letter-spacing:-0.12px;">Color</div>
<div class="cb" style="left:1102px;top:205px"></div>
<div class="l" style="left:1119px;top:206px;letter-spacing:-0.28px;">Alpha</div>
<div class="l" style="left:836px;top:194px;letter-spacing:-0.15px;">Texture Count U</div>
<div class="tb" style="left:923px;top:190px;width:56px;height:19px;background:#fff"><span style="left:3px;top:3px;letter-spacing:0px;">4.0000</span></div>
<div class="l" style="left:836px;top:216px;letter-spacing:-0.15px;">Texture Count V</div>
<div class="tb" style="left:923px;top:214px;width:56px;height:19px;background:#fff"><span style="left:3px;top:3px;letter-spacing:0px;">2.0000</span></div>
<div class="l" style="left:830px;top:269px;letter-spacing:-0.31px;">Color Scale</div>
<div class="tb" style="left:920px;top:266px;width:55px;height:19px;background:#fff"><span style="left:3px;top:3px;letter-spacing:0px;">2.0000</span></div>
<div class="gw" style="left:822px;top:293px;width:172px;height:152px"></div>
<div class="gg" style="left:821px;top:292px;width:172px;height:152px"></div>
<div class="l gt" style="left:828px;top:287px;">Color Key 1</div>
<div class="l" style="left:837px;top:308px;letter-spacing:0px;">R</div>
<div class="tb" style="left:848px;top:302px;width:43px;height:22px"><span style="left:4px;top:3px">254</span><div class="sp" style="left:26px;top:1px;height:10px"><svg width="14" height="9" style="position:absolute;left:0;top:0"><path d="M4.5 5.5 h5 l-2.5 -2.5z" fill="#000"/></svg></div><div class="sp" style="left:26px;top:11px;height:9px"><svg width="14" height="9" style="position:absolute;left:0;top:0"><path d="M4.5 3 h5 l-2.5 2.5z" fill="#000"/></svg></div></div>
<div class="l" style="left:837px;top:335px;letter-spacing:0px;">G</div>
<div class="tb" style="left:848px;top:329px;width:43px;height:22px"><span style="left:4px;top:3px">220</span><div class="sp" style="left:26px;top:1px;height:10px"><svg width="14" height="9" style="position:absolute;left:0;top:0"><path d="M4.5 5.5 h5 l-2.5 -2.5z" fill="#000"/></svg></div><div class="sp" style="left:26px;top:11px;height:9px"><svg width="14" height="9" style="position:absolute;left:0;top:0"><path d="M4.5 3 h5 l-2.5 2.5z" fill="#000"/></svg></div></div>
<div class="l" style="left:837px;top:360px;letter-spacing:0px;">B</div>
<div class="tb" style="left:848px;top:354px;width:43px;height:22px"><span style="left:4px;top:3px">205</span><div class="sp" style="left:26px;top:1px;height:10px"><svg width="14" height="9" style="position:absolute;left:0;top:0"><path d="M4.5 5.5 h5 l-2.5 -2.5z" fill="#000"/></svg></div><div class="sp" style="left:26px;top:11px;height:9px"><svg width="14" height="9" style="position:absolute;left:0;top:0"><path d="M4.5 3 h5 l-2.5 2.5z" fill="#000"/></svg></div></div>
<div class="sw" style="left:926px;top:302px;width:47px;height:36px;background:rgb(254,220,205)"></div>
<div class="bt" style="left:915px;top:351px;width:68px;height:26px"><span style="top:6px">Select</span></div>
<div class="l" style="left:839px;top:394px;letter-spacing:-0.2px;">Color Alpha</div>
<div class="l" style="left:911px;top:394px;letter-spacing:-0.31px;">Color Key Time</div>
<div class="tb" style="left:839px;top:414px;width:56px;height:19px;background:#fff"><span style="left:3px;top:3px;letter-spacing:0px;">0.0100</span></div>
<div class="tb" style="left:920px;top:414px;width:56px;height:19px;background:#fff"><span style="left:3px;top:3px;letter-spacing:0px;">0.1000</span></div>
<div class="gw" style="left:822px;top:455px;width:172px;height:151px"></div>
<div class="gg" style="left:821px;top:454px;width:172px;height:151px"></div>
<div class="l gt" style="left:828px;top:449px;">Color Key 2</div>
<div class="l" style="left:837px;top:473px;letter-spacing:0px;">R</div>
<div class="tb" style="left:848px;top:467px;width:43px;height:22px"><span style="left:4px;top:3px">253</span><div class="sp" style="left:26px;top:1px;height:10px"><svg width="14" height="9" style="position:absolute;left:0;top:0"><path d="M4.5 5.5 h5 l-2.5 -2.5z" fill="#000"/></svg></div><div class="sp" style="left:26px;top:11px;height:9px"><svg width="14" height="9" style="position:absolute;left:0;top:0"><path d="M4.5 3 h5 l-2.5 2.5z" fill="#000"/></svg></div></div>
<div class="l" style="left:837px;top:499px;letter-spacing:0px;">G</div>
<div class="tb" style="left:848px;top:493px;width:43px;height:22px"><span style="left:4px;top:3px">188</span><div class="sp" style="left:26px;top:1px;height:10px"><svg width="14" height="9" style="position:absolute;left:0;top:0"><path d="M4.5 5.5 h5 l-2.5 -2.5z" fill="#000"/></svg></div><div class="sp" style="left:26px;top:11px;height:9px"><svg width="14" height="9" style="position:absolute;left:0;top:0"><path d="M4.5 3 h5 l-2.5 2.5z" fill="#000"/></svg></div></div>
<div class="l" style="left:837px;top:525px;letter-spacing:0px;">B</div>
<div class="tb" style="left:848px;top:519px;width:43px;height:22px"><span style="left:4px;top:3px">172</span><div class="sp" style="left:26px;top:1px;height:10px"><svg width="14" height="9" style="position:absolute;left:0;top:0"><path d="M4.5 5.5 h5 l-2.5 -2.5z" fill="#000"/></svg></div><div class="sp" style="left:26px;top:11px;height:9px"><svg width="14" height="9" style="position:absolute;left:0;top:0"><path d="M4.5 3 h5 l-2.5 2.5z" fill="#000"/></svg></div></div>
<div class="sw" style="left:926px;top:466px;width:47px;height:36px;background:rgb(253,188,172)"></div>
<div class="bt" style="left:915px;top:507px;width:68px;height:26px"><span style="top:6px">Select</span></div>
<div class="l" style="left:839px;top:558px;letter-spacing:-0.2px;">Color Alpha</div>
<div class="l" style="left:911px;top:558px;letter-spacing:-0.31px;">Color Key Time</div>
<div class="tb" style="left:839px;top:576px;width:56px;height:19px;background:#fff"><span style="left:3px;top:3px;letter-spacing:0px;">0.1000</span></div>
<div class="tb" style="left:920px;top:576px;width:56px;height:19px;background:#fff"><span style="left:3px;top:3px;letter-spacing:0px;">0.3500</span></div>
<div class="gw" style="left:822px;top:618px;width:172px;height:184px"></div>
<div class="gg" style="left:821px;top:617px;width:172px;height:184px"></div>
<div class="l gt" style="left:828px;top:612px;">Color Key 3</div>
<div class="l" style="left:837px;top:637px;letter-spacing:0px;">R</div>
<div class="tb" style="left:848px;top:631px;width:43px;height:22px"><span style="left:4px;top:3px">248</span><div class="sp" style="left:26px;top:1px;height:10px"><svg width="14" height="9" style="position:absolute;left:0;top:0"><path d="M4.5 5.5 h5 l-2.5 -2.5z" fill="#000"/></svg></div><div class="sp" style="left:26px;top:11px;height:9px"><svg width="14" height="9" style="position:absolute;left:0;top:0"><path d="M4.5 3 h5 l-2.5 2.5z" fill="#000"/></svg></div></div>
<div class="l" style="left:837px;top:662px;letter-spacing:0px;">G</div>
<div class="tb" style="left:848px;top:656px;width:43px;height:22px"><span style="left:4px;top:3px">138</span><div class="sp" style="left:26px;top:1px;height:10px"><svg width="14" height="9" style="position:absolute;left:0;top:0"><path d="M4.5 5.5 h5 l-2.5 -2.5z" fill="#000"/></svg></div><div class="sp" style="left:26px;top:11px;height:9px"><svg width="14" height="9" style="position:absolute;left:0;top:0"><path d="M4.5 3 h5 l-2.5 2.5z" fill="#000"/></svg></div></div>
<div class="l" style="left:837px;top:686px;letter-spacing:0px;">B</div>
<div class="tb" style="left:848px;top:680px;width:43px;height:22px"><span style="left:4px;top:3px">126</span><div class="sp" style="left:26px;top:1px;height:10px"><svg width="14" height="9" style="position:absolute;left:0;top:0"><path d="M4.5 5.5 h5 l-2.5 -2.5z" fill="#000"/></svg></div><div class="sp" style="left:26px;top:11px;height:9px"><svg width="14" height="9" style="position:absolute;left:0;top:0"><path d="M4.5 3 h5 l-2.5 2.5z" fill="#000"/></svg></div></div>
<div class="sw" style="left:926px;top:629px;width:47px;height:36px;background:rgb(248,138,126)"></div>
<div class="bt" style="left:915px;top:676px;width:68px;height:26px"><span style="top:6px">Select</span></div>
<div class="l" style="left:839px;top:719px;letter-spacing:-0.2px;">Color Alpha</div>
<div class="l" style="left:911px;top:719px;letter-spacing:-0.31px;">Color Key Time</div>
<div class="tb" style="left:839px;top:739px;width:56px;height:19px;background:#fff"><span style="left:3px;top:3px;letter-spacing:0px;">0.0100</span></div>
<div class="tb" style="left:920px;top:739px;width:56px;height:19px;background:#fff"><span style="left:3px;top:3px;letter-spacing:0px;">0.6000</span></div>
<div class="gw" style="left:1002px;top:293px;width:203px;height:202px"></div>
<div class="gg" style="left:1001px;top:292px;width:203px;height:202px"></div>
<div class="l gt" style="left:1008px;top:287px;width:66px;height:13px;padding:0"></div>
<div class="cb" style="left:1009px;top:288px"></div>
<div class="l" style="left:1027px;top:288px;letter-spacing:-0.26px;">Animated</div>
<div class="l" style="left:1014px;top:308px;letter-spacing:-0.15px;">Start Frame</div>
<div class="tb" style="left:1129px;top:303px;width:56px;height:19px;background:#fff"><span style="left:3px;top:3px;letter-spacing:0px;">0.0000</span></div>
<div class="l" style="left:1014px;top:334px;letter-spacing:-0.15px;">Start Frame Variation</div>
<div class="tb" style="left:1129px;top:332px;width:56px;height:19px;background:#fff"><span style="left:3px;top:3px;letter-spacing:0px;">0.0000</span></div>
<div class="l" style="left:1014px;top:360px;letter-spacing:-0.15px;">End Frame</div>
<div class="tb" style="left:1129px;top:360px;width:56px;height:19px;background:#fff"><span style="left:3px;top:3px;letter-spacing:0px;">0.0000</span></div>
<div class="l" style="left:1014px;top:389px;letter-spacing:-0.15px;">Loop Start Frame</div>
<div class="tb" style="left:1129px;top:386px;width:56px;height:19px;background:#fff"><span style="left:3px;top:3px;letter-spacing:0px;">0.0000</span></div>
<div class="l" style="left:1014px;top:417px;letter-spacing:-0.15px;">Loop Start Variation</div>
<div class="tb" style="left:1129px;top:415px;width:56px;height:19px;background:#fff"><span style="left:3px;top:3px;letter-spacing:0px;">0.0000</span></div>
<div class="l" style="left:1014px;top:446px;letter-spacing:-0.15px;">Frame Count</div>
<div class="tb" style="left:1129px;top:443px;width:56px;height:19px;background:#fff"><span style="left:3px;top:3px;letter-spacing:0px;">0.0000</span></div>
<div class="l" style="left:1014px;top:475px;letter-spacing:-0.08px;">Frame Count Variation</div>
<div class="tb" style="left:1129px;top:472px;width:56px;height:19px;background:#fff"><span style="left:3px;top:3px;letter-spacing:0px;">0.0000</span></div>
<div class="gw" style="left:1002px;top:505px;width:203px;height:399px"></div>
<div class="gg" style="left:1001px;top:504px;width:203px;height:399px"></div>
<div class="l gt" style="left:1008px;top:498px;">Addon Models</div>
<div class="tb" style="left:1034px;top:528px;width:136px;height:20px"><span style="left:3px;top:4px">NONE</span><div class="dd" style="width:15px;height:16px"><svg width="15" height="16" style="position:absolute;left:0;top:0"><path d="M4 6 h7 l-3.5 4z" fill="#000"/></svg></div></div>
<div class="l" style="left:1034px;top:591px;letter-spacing:-0.15px;">Fade In Time</div>
<div class="tb" style="left:1112px;top:585px;width:56px;height:19px;background:#fff"><span style="left:3px;top:3px;letter-spacing:0px;">0.1000</span></div>
<div class="l" style="left:1034px;top:611px;letter-spacing:-0.15px;">Fade Out Time</div>
<div class="tb" style="left:1112px;top:611px;width:56px;height:19px;background:#fff"><span style="left:3px;top:3px;letter-spacing:0px;">0.1000</span></div>
<div class="l" style="left:1034px;top:640px;letter-spacing:-0.15px;">Scale Start</div>
<div class="tb" style="left:1112px;top:638px;width:56px;height:19px;background:#fff"><span style="left:3px;top:3px;letter-spacing:0px;">1.0000</span></div>
<div class="l" style="left:1034px;top:664px;letter-spacing:-0.15px;">Scale End</div>
<div class="tb" style="left:1112px;top:663px;width:56px;height:19px;background:#fff"><span style="left:3px;top:3px;letter-spacing:0px;">1.0000</span></div>
<div class="l" style="left:1035px;top:697px;letter-spacing:-0.15px;">Scale In Time</div>
<div class="tb" style="left:1114px;top:690px;width:56px;height:19px;background:#fff"><span style="left:3px;top:3px;letter-spacing:0px;">1.0000</span></div>
<div class="l" style="left:1035px;top:716px;letter-spacing:-0.15px;">Scale Out Time</div>
<div class="tb" style="left:1114px;top:716px;width:56px;height:19px;background:#fff"><span style="left:3px;top:3px;letter-spacing:0px;">1.0000</span></div>
<div style="position:absolute;left:0;top:768px;width:1220px;height:6px;background:#fff"></div></body></html>
